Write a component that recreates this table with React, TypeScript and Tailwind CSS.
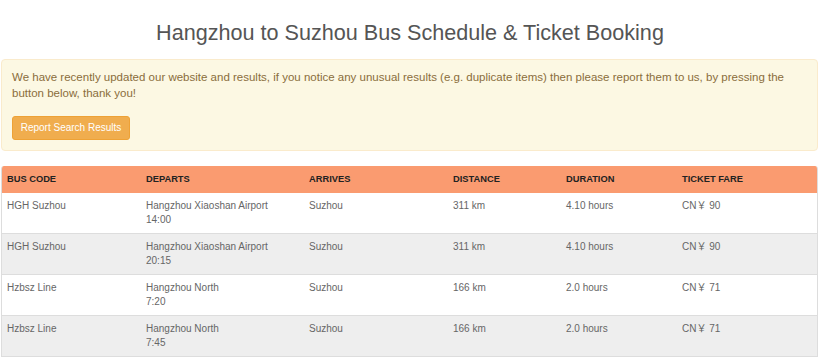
import React from "react";

interface BusRow {
  code: string;
  from: string;
  time: string;
  to: string;
  distance: string;
  duration: string;
  fare: string;
}

const rows: BusRow[] = [
  { code: "HGH Suzhou", from: "Hangzhou Xiaoshan Airport", time: "14:00", to: "Suzhou", distance: "311 km", duration: "4.10 hours", fare: "CN￥ 90" },
  { code: "HGH Suzhou", from: "Hangzhou Xiaoshan Airport", time: "20:15", to: "Suzhou", distance: "311 km", duration: "4.10 hours", fare: "CN￥ 90" },
  { code: "Hzbsz Line", from: "Hangzhou North", time: "7:20", to: "Suzhou", distance: "166 km", duration: "2.0 hours", fare: "CN￥ 71" },
  { code: "Hzbsz Line", from: "Hangzhou North", time: "7:45", to: "Suzhou", distance: "166 km", duration: "2.0 hours", fare: "CN￥ 71" },
];

const headers = ["Bus Code", "Departs", "Arrives", "Distance", "Duration", "Ticket Fare"];
const cols = "grid grid-cols-[139px_163px_144px_113px_116px_140px]";

export default function App() {
  return (
    <div className="w-[820px] bg-white px-px" style={{ fontFamily: '"Liberation Sans", Arial, "Noto Sans CJK SC", sans-serif' }}>
      <h1 className="pt-[19px] text-center text-[21.6px] leading-[28px] text-[#555]">
        Hangzhou to Suzhou Bus Schedule &amp; Ticket Booking
      </h1>

      <div className="mt-[12px] w-[817px] rounded border border-[#faebcc] bg-[#fcf8e3] px-[10px] pt-[9px] pb-[10px] text-[11.5px] leading-[16px] text-[#8a6d3b]">
        <p>
          We have recently updated our website and results, if you notice any unusual results (e.g. duplicate items) then please report them to us, by pressing the button below, thank you!
        </p>
        <button className="mt-[15px] h-[24px] w-[118px] whitespace-nowrap rounded-[3px] border border-[#eea236] bg-[#f0ad4e] text-[10px] text-white">
          Report Search Results
        </button>
      </div>

      <div className="mt-[15px] w-[817px] overflow-hidden rounded-t-[3px] border-x border-[#ddd]">
        <div className={`${cols} h-[27px] items-center bg-[#fa9b70] text-[9.3px] font-bold uppercase text-[#222]`}>
          {headers.map(h => (
            <div key={h} className="pl-[5px]">{h}</div>
          ))}
        </div>
        {rows.map((r, i) => (
          <div
            key={i}
            className={`${cols} h-[41px] border-b border-[#ddd] pt-[6px] text-[10px] leading-[14px] text-[#666] ${i % 2 ? "bg-[#eeeeee]" : "bg-white"}`}
          >
            <div className="pl-[5px]">{r.code}</div>
            <div className="pl-[5px]">
              {r.from}
              <br />
              {r.time}
            </div>
            <div className="pl-[5px]">{r.to}</div>
            <div className="pl-[5px]">{r.distance}</div>
            <div className="pl-[5px]">{r.duration}</div>
            <div className="pl-[5px]">{r.fare}</div>
          </div>
        ))}
      </div>
    </div>
  );
}
